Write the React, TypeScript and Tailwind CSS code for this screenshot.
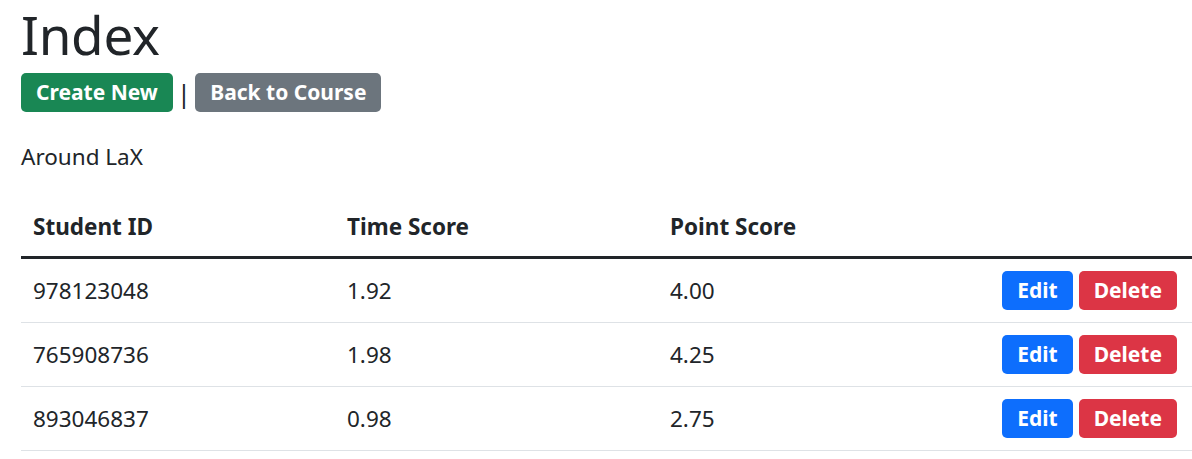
const rows = [
  { id: '978123048', time: '1.92', points: '4.00' },
  { id: '765908736', time: '1.98', points: '4.25' },
  { id: '893046837', time: '0.98', points: '2.75' },
]

function Btn({ children, color }: { children: React.ReactNode; color: string }) {
  return (
    <button
      className={`h-[39px] px-[15px] rounded-[5px] text-white font-bold text-[21px] leading-none flex items-center ${color}`}
    >
      {children}
    </button>
  )
}

export default function App() {
  return (
    <div
      className="min-h-screen bg-white text-[#212529] pl-[21px] pt-[1px]"
      style={{ fontFamily: '"Noto Sans", "Open Sans", sans-serif' }}
    >
      <h1 className="text-[53px] leading-[68px] font-normal tracking-[-0.3px]">Index</h1>

      <div className="mt-[4px] flex items-center gap-[4px] h-[39px]">
        <Btn color="bg-[#198754]">Create New</Btn>
        <span className="text-[26px] leading-none text-[#212529]">|</span>
        <Btn color="bg-[#6c757d]">Back to Course</Btn>
      </div>

      <p className="mt-[28px] text-[22.5px] leading-[34px]">Around LaX</p>

      <table className="mt-[24px] w-[1171px] border-collapse text-[22.5px] leading-[34px]">
        <thead>
          <tr className="border-b-[3px] border-[#212529]">
            <th className="w-[314px] text-left font-bold px-[12px] py-[12px]">Student ID</th>
            <th className="w-[323px] text-left font-bold px-[12px] py-[12px]">Time Score</th>
            <th className="w-[330px] text-left font-bold px-[12px] py-[12px]">Point Score</th>
            <th className="px-[12px] py-[12px]"></th>
          </tr>
        </thead>
        <tbody>
          {rows.map((r) => (
            <tr key={r.id} className="border-b border-[#dee2e6]">
              <td className="px-[12px] py-[12px]">{r.id}</td>
              <td className="px-[12px] py-[12px]">{r.time}</td>
              <td className="px-[12px] py-[12px]">{r.points}</td>
              <td className="pl-[12px] pr-[15px] py-[12px]">
                <div className="flex justify-end gap-[6px]">
                  <Btn color="bg-[#0d6efd]">Edit</Btn>
                  <Btn color="bg-[#dc3545]">Delete</Btn>
                </div>
              </td>
            </tr>
          ))}
        </tbody>
      </table>
    </div>
  )
}
